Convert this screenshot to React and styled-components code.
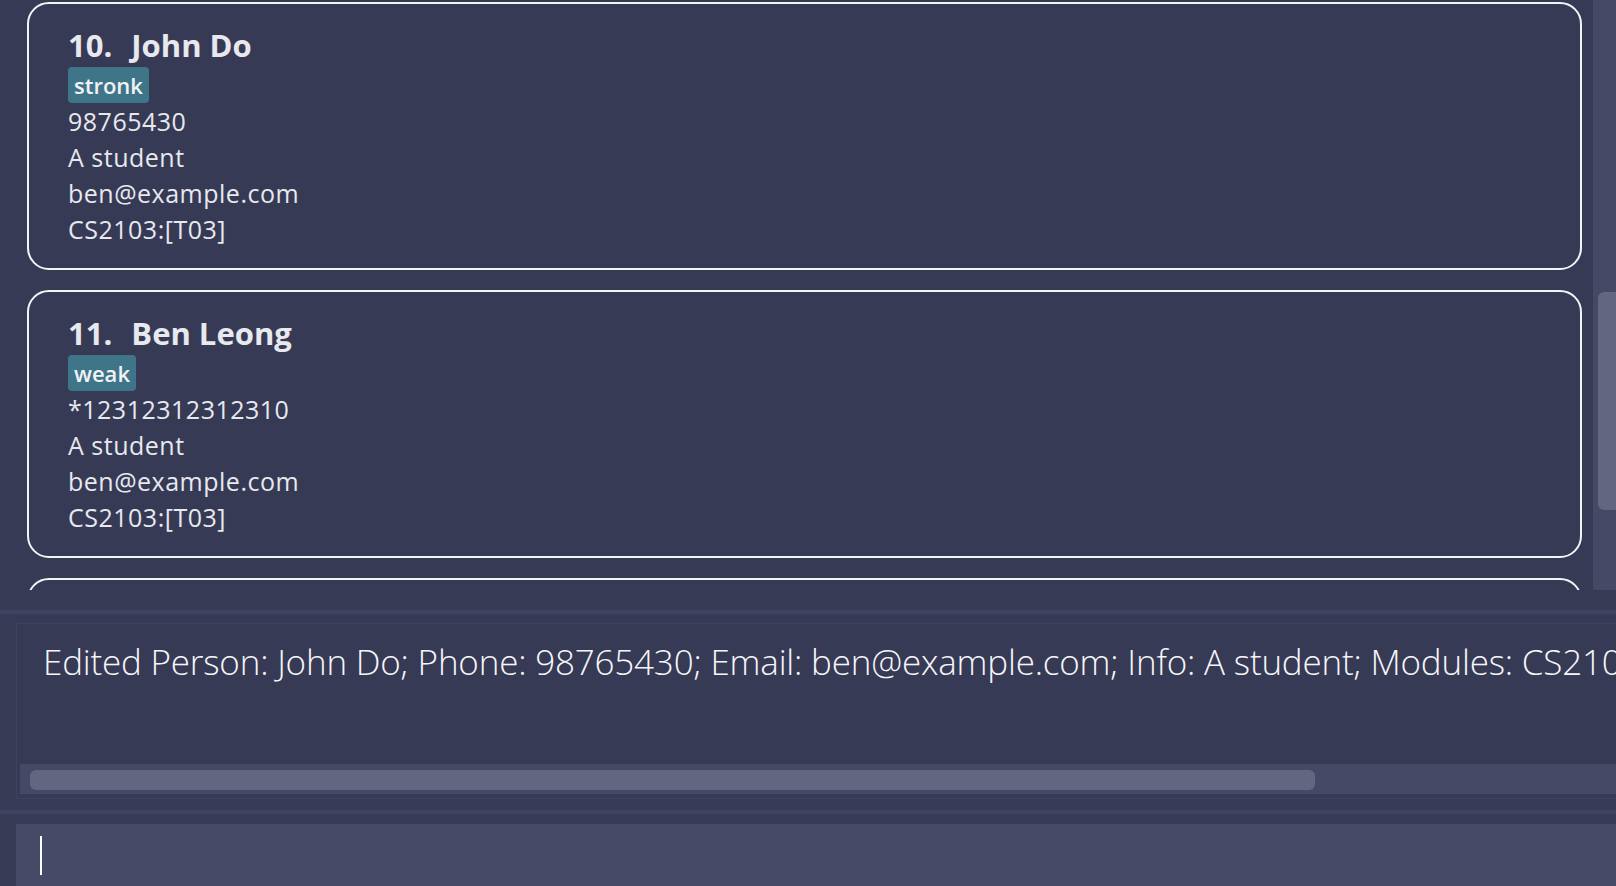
import styled, { createGlobalStyle } from "styled-components";

const GlobalStyle = createGlobalStyle`
  html, body {
    margin: 0;
    padding: 0;
    background: #363a55;
    overflow: hidden;
  }
  * {
    box-sizing: border-box;
  }
`;

const Window = styled.div`
  width: 100vw;
  height: 100vh;
  background: #363a55;
  display: flex;
  flex-direction: column;
  font-family: "Open Sans", "Liberation Sans", sans-serif;
  color: #e8e8ef;
  overflow: hidden;
`;

const ListPanel = styled.div`
  height: 590px;
  flex-shrink: 0;
  display: flex;
`;

const ListArea = styled.div`
  flex: 1;
  overflow: hidden;
  padding: 2px 11px 0 27px;
  display: flex;
  flex-direction: column;
  gap: 20px;
`;

const Card = styled.div`
  flex-shrink: 0;
  border: 2px solid #f4f4f6;
  border-radius: 22px;
  padding: 20px 20px 21px 39px;
`;

const Heading = styled.div`
  display: flex;
  gap: 19px;
  font-size: 31px;
  font-weight: 700;
  line-height: 42px;
`;

const TagRow = styled.div`
  display: flex;
  margin-top: 1px;
`;

const Tag = styled.span`
  background: #3f7589;
  color: #f2f2f6;
  border-radius: 4px;
  font-size: 22px;
  font-weight: 600;
  line-height: 36px;
  padding: 0 6px 0 6px;
`;

const Line = styled.div`
  font-size: 25px;
  line-height: 36px;
  letter-spacing: 0.5px;
`;

const VScroll = styled.div`
  width: 23px;
  background: #464966;
  padding: 292px 0 0 5px;
`;

const VThumb = styled.div`
  height: 218px;
  background: #636681;
  border-radius: 6px 0 0 6px;
`;

const Band = styled.div`
  height: 4px;
  flex-shrink: 0;
  background: #3f4260;
  margin-top: ${(p) => p.top}px;
`;

const ResultPane = styled.div`
  padding: 9px 0 0 16px;
  flex-shrink: 0;
`;

const ResultBox = styled.div`
  border: 1px solid #3e4160;
  border-right: none;
  padding: 0 0 4px 3px;
`;

const ResultText = styled.div`
  height: 140px;
  padding: 14px 0 0 23px;
  font-size: 35px;
  font-weight: 300;
  letter-spacing: -0.2px;
  line-height: 1.362;
  white-space: nowrap;
  color: #f6f6fa;
`;

const HScroll = styled.div`
  height: 30px;
  background: #464966;
  padding: 6px 0 4px 10px;
`;

const HThumb = styled.div`
  width: 1285px;
  height: 20px;
  background: #636681;
  border-radius: 6px;
`;

const CommandBox = styled.div`
  margin: 10px 0 0 16px;
  flex: 1;
  background: #464a66;
  padding: 12px 0 0 24px;
`;

const Caret = styled.div`
  width: 2px;
  height: 39px;
  background: #ffffff;
`;

const people = [
  {
    id: 10,
    name: "John Do",
    tag: "stronk",
    phone: "98765430",
    info: "A student",
    email: "ben@example.com",
    modules: "CS2103:[T03]",
  },
  {
    id: 11,
    name: "Ben Leong",
    tag: "weak",
    phone: "*12312312312310",
    info: "A student",
    email: "ben@example.com",
    modules: "CS2103:[T03]",
  },
  {
    id: 12,
    name: "Alex Yeoh",
    tag: "friends",
    phone: "87438807",
    info: "A student",
    email: "alex@example.com",
    modules: "CS2103:[T03]",
  },
];

export default function App() {
  return (
    <Window>
      <GlobalStyle />
      <ListPanel>
        <ListArea>
          {people.map((p) => (
            <Card key={p.id}>
              <Heading>
                <span>{p.id}.</span>
                <span>{p.name}</span>
              </Heading>
              <TagRow>
                <Tag>{p.tag}</Tag>
              </TagRow>
              <Line>{p.phone}</Line>
              <Line>{p.info}</Line>
              <Line>{p.email}</Line>
              <Line>{p.modules}</Line>
            </Card>
          ))}
        </ListArea>
        <VScroll>
          <VThumb />
        </VScroll>
      </ListPanel>
      <Band top={20} />
      <ResultPane>
        <ResultBox>
          <ResultText>
            Edited Person: John Do; Phone: 98765430; Email: ben@example.com;
            Info: A student; Modules: CS2103:[T03]
          </ResultText>
          <HScroll>
            <HThumb />
          </HScroll>
        </ResultBox>
      </ResultPane>
      <Band top={11} />
      <CommandBox>
        <Caret />
      </CommandBox>
    </Window>
  );
}
